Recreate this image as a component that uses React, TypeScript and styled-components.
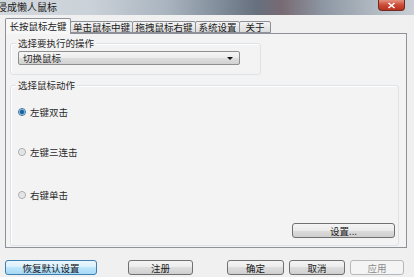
import styled, { createGlobalStyle } from "styled-components";

const GlobalStyle = createGlobalStyle`
  html, body {
    margin: 0;
    padding: 0;
    background: #f0f0f0;
  }
  body {
    font-family: "Noto Sans CJK SC", "Noto Sans", sans-serif;
    font-size: 9.5px;
    color: #2a2a2a;
  }
`;

const tabs = [
  { label: "长按鼠标左键", width: 66, active: true },
  { label: "单击鼠标中键", width: 63, active: false },
  { label: "拖拽鼠标右键", width: 64, active: false },
  { label: "系统设置", width: 45, active: false },
  { label: "关于", width: 32, active: false },
];

const actions = [
  { label: "左键双击", checked: true, top: 15 },
  { label: "左键三连击", checked: false, top: 28 },
  { label: "右键单击", checked: false, top: 31 },
];

const App = () => {
  return (
    <>
      <GlobalStyle />
      <Window>
        <TitleBar>
          <Title>侵成懒人鼠标</Title>
          <CloseBtn>
            <svg width="9" height="7" viewBox="0 0 9 7">
              <path d="M1.5 1 L7.5 6 M7.5 1 L1.5 6" stroke="#fff" strokeWidth="1.6" />
            </svg>
          </CloseBtn>
        </TitleBar>

        <Body>
          <TabStrip>
            {tabs.map((t) => (
              <Tab key={t.label} $active={t.active} $width={t.width}>
                {t.label}
              </Tab>
            ))}
          </TabStrip>

          <Panel>
            <GroupBox $width={251} $height={32}>
              <Caption>选择要执行的操作</Caption>
              <Select>
                <span>切换鼠标</span>
                <Arrow />
              </Select>
            </GroupBox>

            <GroupBox $width={389} $height={161} $top={10}>
              <Caption>选择鼠标动作</Caption>
              {actions.map((a) => (
                <RadioRow key={a.label} $top={a.top}>
                  <Radio $checked={a.checked} />
                  <span>{a.label}</span>
                </RadioRow>
              ))}
              <SettingsButton>设置...</SettingsButton>
            </GroupBox>
          </Panel>

          <ButtonBar>
            <Button $variant="primary" $width={92}>
              恢复默认设置
            </Button>
            <Button $width={65} style={{ marginLeft: 31 }}>
              注册
            </Button>
            <RightButtons>
              <Button $width={57}>确定</Button>
              <Button $width={56}>取消</Button>
              <Button $variant="disabled" $width={54}>
                应用
              </Button>
            </RightButtons>
          </ButtonBar>
        </Body>
      </Window>
    </>
  );
};

export default App;

const Window = styled.div`
  width: 414px;
  height: 277px;
  display: flex;
  flex-direction: column;
  background: #f0f0f0;
  overflow: hidden;
`;

const TitleBar = styled.div`
  height: 15px;
  flex: none;
  display: flex;
  align-items: flex-start;
  background: linear-gradient(
    90deg,
    #d3d8dd 0%,
    #cad1d8 22%,
    #aab5c0 40%,
    #84909d 52%,
    #66707e 62%,
    #786a73 68%,
    #8d97a3 78%,
    #aab3bc 88%,
    #c9cfd5 100%
  );
`;

const Title = styled.span`
  margin-left: -3px;
  line-height: 14px;
  font-size: 10px;
  color: #1c1c1c;
  white-space: nowrap;
`;

const CloseBtn = styled.div`
  margin-left: auto;
  margin-right: 9px;
  width: 27px;
  height: 11px;
  box-sizing: border-box;
  border: 1px solid #6e2b22;
  border-top: none;
  border-radius: 0 0 4px 4px;
  background: linear-gradient(#e4917f, #cc4a36 50%, #b9331f 100%);
  display: flex;
  align-items: center;
  justify-content: center;
`;

const Body = styled.div`
  flex: 1;
  display: flex;
  flex-direction: column;
  padding: 3px 0 0 5px;
`;

const TabStrip = styled.div`
  height: 15px;
  display: flex;
  align-items: flex-end;
`;

const Tab = styled.div<{ $active: boolean; $width: number }>`
  position: relative;
  z-index: ${(p) => (p.$active ? 2 : 1)};
  box-sizing: border-box;
  width: ${(p) => p.$width}px;
  height: ${(p) => (p.$active ? 16 : 12)}px;
  margin-bottom: ${(p) => (p.$active ? -1 : 0)}px;
  margin-left: ${(p) => (p.$active ? 0 : -1)}px;
  border: 1px solid #8e9198;
  border-bottom: ${(p) => (p.$active ? "none" : "1px solid #8e9198")};
  border-radius: 2px 2px 0 0;
  background: ${(p) =>
    p.$active ? "#f7f7f7" : "linear-gradient(#f3f3f3, #e6e6e6 55%, #dcdcdc)"};
  display: flex;
  align-items: center;
  justify-content: center;
  padding-bottom: ${(p) => (p.$active ? 2 : 0)}px;
  white-space: nowrap;
  color: #1a1a1a;
`;

const Panel = styled.div`
  box-sizing: border-box;
  width: 402px;
  height: 215px;
  border: 1px solid #8e9198;
  background: #f3f3f3;
  padding: 9px 0 0 4px;
  display: flex;
  flex-direction: column;
`;

const GroupBox = styled.div<{ $width: number; $height: number; $top?: number }>`
  box-sizing: border-box;
  width: ${(p) => p.$width}px;
  height: ${(p) => p.$height}px;
  margin-top: ${(p) => p.$top ?? 0}px;
  border: 1px solid #dde2e6;
  border-radius: 3px;
  box-shadow: inset 1px 1px 0 #ffffff;
  display: flex;
  flex-direction: column;
  align-items: flex-start;
`;

const Caption = styled.div`
  margin: -7px 0 0 5px;
  padding: 0 2px;
  line-height: 12px;
  background: #f3f3f3;
  white-space: nowrap;
`;

const Select = styled.div`
  box-sizing: border-box;
  margin: 2px 0 0 7px;
  width: 222px;
  height: 14px;
  border: 1px solid #8f8f8f;
  border-radius: 2px;
  background: linear-gradient(#f5f5f5, #ececec 50%, #dedede 50%, #d2d2d2);
  display: flex;
  align-items: center;
  padding: 0 6px 0 4px;
  line-height: 12px;
`;

const Arrow = styled.span`
  margin-left: auto;
  width: 0;
  height: 0;
  border-left: 3px solid transparent;
  border-right: 3px solid transparent;
  border-top: 3px solid #111;
`;

const RadioRow = styled.div<{ $top: number }>`
  margin: ${(p) => p.$top}px 0 0 7px;
  height: 12px;
  display: flex;
  align-items: center;
  gap: 4px;
  white-space: nowrap;
`;

const Radio = styled.span<{ $checked: boolean }>`
  box-sizing: border-box;
  width: 8px;
  height: 8px;
  border-radius: 50%;
  border: 1px solid ${(p) => (p.$checked ? "#3b6f99" : "#a4a6a8")};
  background: ${(p) =>
    p.$checked
      ? "radial-gradient(circle, #1d64a6 0 1.6px, #58a3d8 2.4px, #e6eef5 2.9px)"
      : "radial-gradient(circle, #e4e4e4 0 2px, #f6f6f6 3px)"};
`;

const Button = styled.div<{ $variant?: "primary" | "disabled"; $width: number }>`
  box-sizing: border-box;
  width: ${(p) => p.$width}px;
  height: 15px;
  border-radius: 3px;
  border: 1px solid
    ${(p) =>
      p.$variant === "primary"
        ? "#3c7fb1"
        : p.$variant === "disabled"
        ? "#b4b8bb"
        : "#707070"};
  background: ${(p) =>
    p.$variant === "primary"
      ? "linear-gradient(#eaf6fd, #d9f0fc 50%, #bee6fd 50%, #a7d9f5)"
      : p.$variant === "disabled"
      ? "#f4f4f4"
      : "linear-gradient(#f4f4f4, #ebebeb 50%, #dddddd 50%, #cfcfcf)"};
  color: ${(p) => (p.$variant === "disabled" ? "#8a8a8a" : "#1a1a1a")};
  display: flex;
  align-items: center;
  justify-content: center;
  line-height: 12px;
  white-space: nowrap;
`;

const SettingsButton = styled(Button).attrs({ $width: 103 })`
  margin-top: auto;
  margin-bottom: 7px;
  margin-right: 3px;
  align-self: flex-end;
`;

const ButtonBar = styled.div`
  margin-top: 12px;
  display: flex;
  align-items: center;
  padding-right: 10px;
`;

const RightButtons = styled.div`
  margin-left: auto;
  display: flex;
  gap: 5px;
`;
